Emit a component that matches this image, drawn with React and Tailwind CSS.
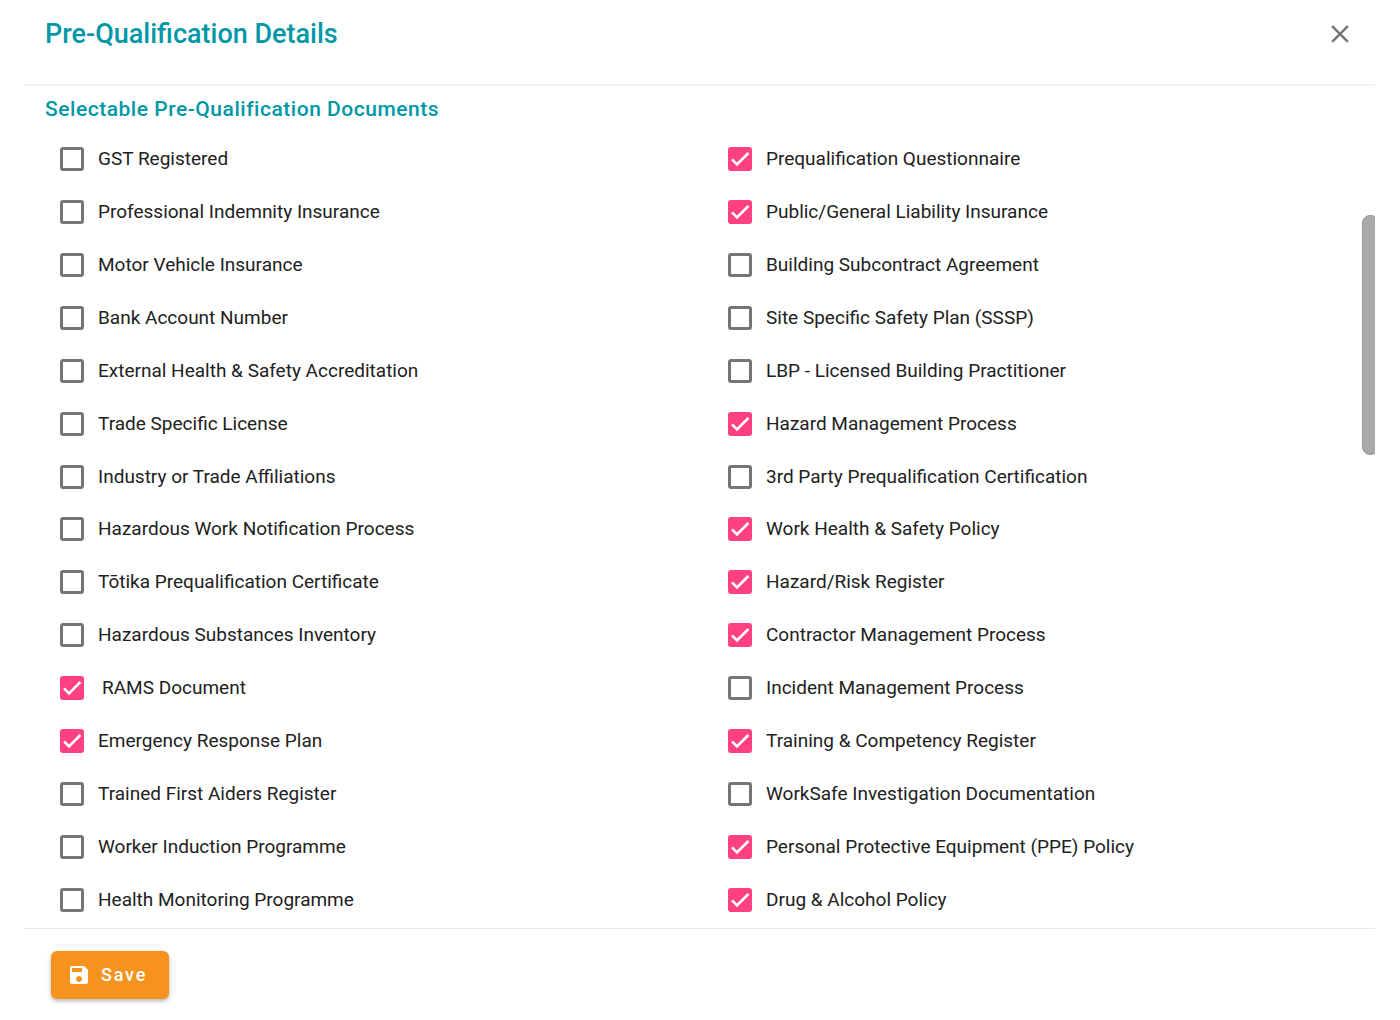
import { useState } from "react";
import { MdClose, MdSave } from "react-icons/md";

const leftDocuments = [
  { name: "GST Registered", selected: false },
  { name: "Professional Indemnity Insurance", selected: false },
  { name: "Motor Vehicle Insurance", selected: false },
  { name: "Bank Account Number", selected: false },
  { name: "External Health & Safety Accreditation", selected: false },
  { name: "Trade Specific License", selected: false },
  { name: "Industry or Trade Affiliations", selected: false },
  { name: "Hazardous Work Notification Process", selected: false },
  { name: "Tōtika Prequalification Certificate", selected: false },
  { name: "Hazardous Substances Inventory", selected: false },
  { name: "RAMS Document", selected: true, custom: true },
  { name: "Emergency Response Plan", selected: true },
  { name: "Trained First Aiders Register", selected: false },
  { name: "Worker Induction Programme", selected: false },
  { name: "Health Monitoring Programme", selected: false },
];

const rightDocuments = [
  { name: "Prequalification Questionnaire", selected: true },
  { name: "Public/General Liability Insurance", selected: true },
  { name: "Building Subcontract Agreement", selected: false },
  { name: "Site Specific Safety Plan (SSSP)", selected: false },
  { name: "LBP - Licensed Building Practitioner", selected: false },
  { name: "Hazard Management Process", selected: true },
  { name: "3rd Party Prequalification Certification", selected: false },
  { name: "Work Health & Safety Policy", selected: true },
  { name: "Hazard/Risk Register", selected: true },
  { name: "Contractor Management Process", selected: true },
  { name: "Incident Management Process", selected: false },
  { name: "Training & Competency Register", selected: true },
  { name: "WorkSafe Investigation Documentation", selected: false },
  { name: "Personal Protective Equipment (PPE) Policy", selected: true },
  { name: "Drug & Alcohol Policy", selected: true },
];

function DocumentCheckbox({ document, id }) {
  const [checked, setChecked] = useState(document.selected);

  return (
    <li className="flex items-center">
      <span className="grid size-6 shrink-0">
        <input
          type="checkbox"
          id={id}
          checked={checked}
          onChange={(event) => setChecked(event.target.checked)}
          className="col-start-1 row-start-1 size-6 appearance-none rounded-[3px] border-[3px] border-[#757575] checked:border-[#ff4081] checked:bg-[#ff4081]"
        />
        {checked && (
          <svg
            viewBox="0 0 24 24"
            className="pointer-events-none col-start-1 row-start-1 size-6 fill-none stroke-white stroke-[2.7]"
          >
            <path d="M4 12.4 9 17.4 20.4 6" />
          </svg>
        )}
      </span>
      <label
        htmlFor={id}
        className={
          document.custom
            ? "pl-[18px] text-[19px] leading-6"
            : "pl-[14px] text-[19px] leading-6"
        }
      >
        {document.name}
      </label>
    </li>
  );
}

function DocumentColumn({ documents, prefix }) {
  return (
    <ul className="grid auto-rows-fr pl-9">
      {documents.map((document, index) => (
        <DocumentCheckbox
          key={document.name}
          id={`${prefix}-${index}`}
          document={document}
        />
      ))}
    </ul>
  );
}

export default function App() {
  return (
    <div className="flex min-h-screen flex-col bg-white pr-[25px] pl-6 font-[Roboto,sans-serif] text-[#212121]">
      <header className="flex h-[86px] items-start justify-between border-b-2 border-[#f3f3f3] pt-4 pr-5 pl-[21px]">
        <h1 className="text-[27px] leading-9 font-medium text-[#0097a7]">
          Pre-Qualification Details
        </h1>
        <button type="button" aria-label="Close" className="mt-[3px] text-[#757575]">
          <MdClose className="size-[30px]" />
        </button>
      </header>

      <main className="relative flex flex-1 flex-col overflow-hidden pr-[15px] pb-[2px]">
        <h2 className="pt-2 pl-[21px] text-[21px] leading-[30px] font-medium tracking-wide text-[#0097a7]">
          Selectable Pre-Qualification Documents
        </h2>
        <div className="mt-[9px] grid flex-1 grid-cols-2">
          <DocumentColumn documents={leftDocuments} prefix="left" />
          <DocumentColumn documents={rightDocuments} prefix="right" />
        </div>
        {/* scrollbar thumb */}
        <div className="absolute top-[129px] -right-1 h-60 w-[17px] rounded-lg border border-[#8f9ba8] bg-[#a9a9a9]" />
      </main>

      <footer className="flex h-[92px] items-start border-t border-[#e8e8e8] pt-[22px] pl-[27px]">
        <button
          type="button"
          className="flex h-12 w-[118px] items-center gap-[10px] rounded-md bg-[#f6921e] pb-px pl-4 text-[18px] font-medium tracking-widest text-white shadow-[0_2px_4px_rgba(0,0,0,0.3)]"
        >
          <MdSave className="size-6" />
          Save
        </button>
      </footer>
    </div>
  );
}
